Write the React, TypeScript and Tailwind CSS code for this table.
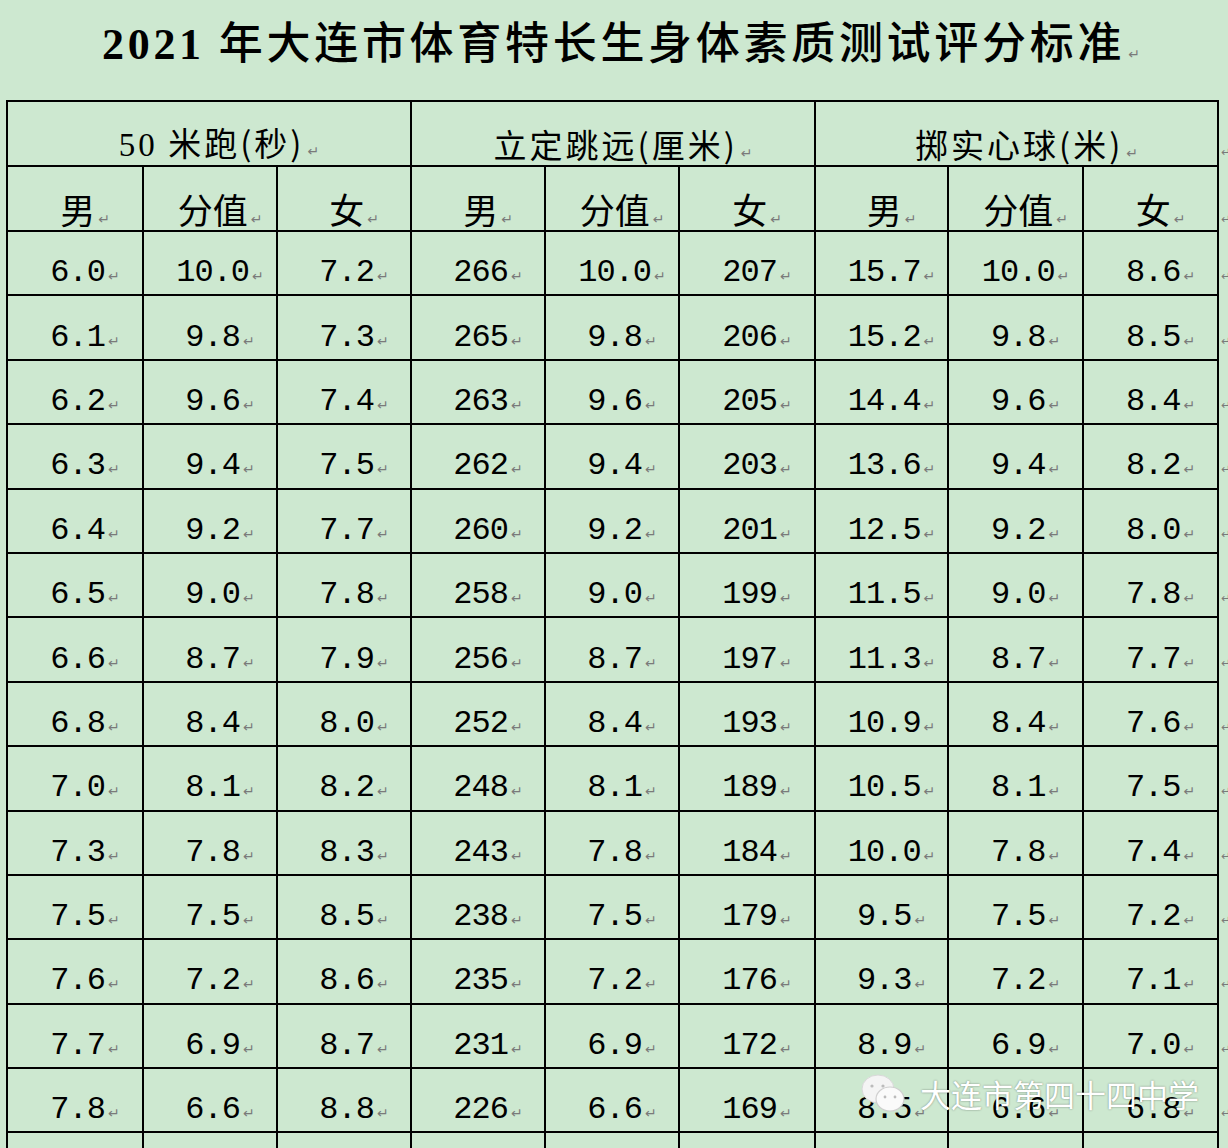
import { type FC, type ReactNode } from 'react'

const rows: string[][] = [
  ['6.0', '10.0', '7.2', '266', '10.0', '207', '15.7', '10.0', '8.6'],
  ['6.1', '9.8', '7.3', '265', '9.8', '206', '15.2', '9.8', '8.5'],
  ['6.2', '9.6', '7.4', '263', '9.6', '205', '14.4', '9.6', '8.4'],
  ['6.3', '9.4', '7.5', '262', '9.4', '203', '13.6', '9.4', '8.2'],
  ['6.4', '9.2', '7.7', '260', '9.2', '201', '12.5', '9.2', '8.0'],
  ['6.5', '9.0', '7.8', '258', '9.0', '199', '11.5', '9.0', '7.8'],
  ['6.6', '8.7', '7.9', '256', '8.7', '197', '11.3', '8.7', '7.7'],
  ['6.8', '8.4', '8.0', '252', '8.4', '193', '10.9', '8.4', '7.6'],
  ['7.0', '8.1', '8.2', '248', '8.1', '189', '10.5', '8.1', '7.5'],
  ['7.3', '7.8', '8.3', '243', '7.8', '184', '10.0', '7.8', '7.4'],
  ['7.5', '7.5', '8.5', '238', '7.5', '179', '9.5', '7.5', '7.2'],
  ['7.6', '7.2', '8.6', '235', '7.2', '176', '9.3', '7.2', '7.1'],
  ['7.7', '6.9', '8.7', '231', '6.9', '172', '8.9', '6.9', '7.0'],
  ['7.8', '6.6', '8.8', '226', '6.6', '169', '8.5', '6.6', '6.8'],
]

const widths = ['w-[136px]', 'w-[134px]', 'w-[134px]', 'w-[134px]', 'w-[134px]', 'w-[136px]', 'w-[133px]', 'w-[135px]', 'w-[135px]']

// Word 段落标记
const Mark: FC = () => (
  <span className="ml-[3px] text-[14px] leading-none tracking-normal text-[#7a7a7a] [font-family:'DejaVu_Sans',sans-serif]">↵</span>
)

const Edge: FC = () => (
  <td className="border-0 p-0 pt-[18px] align-middle leading-none">
    <span className="ml-[2px] text-[12px] leading-none text-[#7a7a7a] [font-family:'DejaVu_Sans',sans-serif]">↵</span>
  </td>
)

const Cell: FC<{ children: ReactNode; span?: number }> = ({ children, span }) => (
  <td colSpan={span} className="border-2 border-black p-0 pt-[20px] text-center align-middle">
    <span className="ml-[20px]">
      {children}
      <Mark />
    </span>
  </td>
)

const Watermark: FC = () => (
  <div className="absolute left-[858px] top-[1072px] flex items-center gap-[10px]">
    <svg width="52" height="44" viewBox="0 0 52 44">
      <ellipse cx="20" cy="17" rx="16" ry="14" fill="#f4f4f4" stroke="#d8d8d8" strokeWidth="1" />
      <circle cx="14" cy="14" r="1.6" fill="#bbb" />
      <circle cx="25" cy="14" r="1.6" fill="#bbb" />
      <ellipse cx="32" cy="27" rx="14" ry="12" fill="#fafafa" stroke="#cfcfcf" strokeWidth="1.2" />
      <circle cx="27" cy="25" r="1.4" fill="#bbb" />
      <circle cx="37" cy="25" r="1.4" fill="#bbb" />
    </svg>
    <span className="text-[31px] leading-[40px] text-white [font-family:'Noto_Sans_CJK_SC',sans-serif] [text-shadow:0_0_2px_rgba(0,0,0,0.45)]">
      大连市第四十四中学
    </span>
  </div>
)

export default function App() {
  return (
    <div className="relative h-[1148px] w-[1228px] overflow-hidden bg-[#cde8d0] text-black [font-family:'Liberation_Serif','Noto_Sans_CJK_SC',serif]">
      <div className="h-[100px] pt-[12px] pl-[102px]">
        <h1 className="text-[44px] leading-[56px] tracking-[3.7px]">
          <span className="font-bold [font-family:'Liberation_Serif',serif]">2021</span>
          <span className="ml-[14px] font-medium [font-family:'Noto_Sans_CJK_SC',sans-serif]">年大连市体育特长生身体素质测试评分标准</span>
          <Mark />
        </h1>
      </div>

      <table className="ml-[6px] w-[1222px] table-fixed border-collapse">
        <colgroup>
          {widths.map((w, i) => (
            <col key={i} className={w} />
          ))}
          <col />
        </colgroup>
        <tbody>
          <tr className="h-[65px] text-[33px] leading-[36px] tracking-[3px] [font-family:'Noto_Sans_CJK_SC',sans-serif]">
            <Cell span={3}>
              <span className="[font-family:'Liberation_Serif',serif]">50</span> 米跑(秒)
            </Cell>
            <Cell span={3}>立定跳远(厘米)</Cell>
            <Cell span={3}>掷实心球(米)</Cell>
            <Edge />
          </tr>
          <tr className="h-[65px] text-[35px] leading-[36px] [font-family:'Noto_Sans_CJK_SC',sans-serif]">
            {['男', '分值', '女', '男', '分值', '女', '男', '分值', '女'].map((t, i) => (
              <Cell key={i}>{t}</Cell>
            ))}
            <Edge />
          </tr>
          {rows.map((r, ri) => (
            <tr key={ri} className="h-[64.4px] text-[32px] leading-[36px] tracking-[-1px] [font-family:'Liberation_Mono',monospace]">
              {r.map((v, ci) => (
                <Cell key={ci}>{v}</Cell>
              ))}
              <Edge />
            </tr>
          ))}
          <tr className="h-[64px]">
            {widths.map((_, i) => (
              <td key={i} className="border-2 border-black" />
            ))}
            <td className="border-0" />
          </tr>
        </tbody>
      </table>

      <Watermark />
    </div>
  )
}
